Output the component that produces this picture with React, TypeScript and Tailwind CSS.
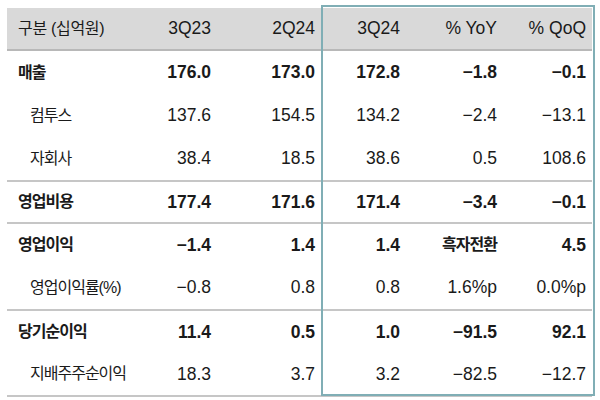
const rows = [
  { group: 1, h: "h-[43px]", label: "매출", bold: true, indent: false, v: ["176.0", "173.0", "172.8", "−1.8", "−0.1"] },
  { group: 1, h: "h-[43px]", label: "컴투스", bold: false, indent: true, v: ["137.6", "154.5", "134.2", "−2.4", "−13.1"] },
  { group: 1, h: "h-[43px]", label: "자회사", bold: false, indent: true, v: ["38.4", "18.5", "38.6", "0.5", "108.6"] },
  { group: 2, h: "h-[40px]", label: "영업비용", bold: true, indent: false, v: ["177.4", "171.6", "171.4", "−3.4", "−0.1"] },
  { group: 3, h: "h-[42px]", label: "영업이익", bold: true, indent: false, v: ["−1.4", "1.4", "1.4", "흑자전환", "4.5"] },
  { group: 3, h: "h-[43px]", label: "영업이익률(%)", bold: false, indent: true, v: ["−0.8", "0.8", "0.8", "1.6%p", "0.0%p"] },
  { group: 4, h: "h-[42px]", label: "당기순이익", bold: true, indent: false, v: ["11.4", "0.5", "1.0", "−91.5", "92.1"] },
  { group: 4, h: "h-[42px]", label: "지배주주순이익", bold: false, indent: true, v: ["18.3", "3.7", "3.2", "−82.5", "−12.7"] },
];

const cols = "grid grid-cols-[123px_91px_104px_85px_97px_85px]";
const num = "font-['Liberation_Sans','Noto_Sans_CJK_KR',sans-serif] text-[17.5px]";
const kor = "font-['Liberation_Sans','Noto_Sans_CJK_KR',sans-serif] text-[16px] tracking-[-1px]";

function Cell({ text, last }: { text: string; last?: boolean }) {
  const isKor = /[가-힣]/.test(text);
  return (
    <div className={`flex items-center justify-end ${last ? "pr-[6px]" : "pr-[10px]"} ${isKor ? kor : num}`}>
      {text}
    </div>
  );
}

export default function App() {
  const groups = [1, 2, 3, 4];
  return (
    <div className="relative w-[600px] h-[400px] bg-white text-[#1a1a1a] overflow-hidden">
      <div className="ml-[7px] mt-[8px] w-[585px]">
        <div className={`${cols} h-[43px] bg-[#d9d9d9] border-b-2 border-[#b8b8b8]`}>
          <div className="flex items-center pl-[11px] font-['Liberation_Sans','Noto_Sans_CJK_KR',sans-serif] text-[16px] tracking-[-0.3px]">
            구분 (십억원)
          </div>
          <Cell text="3Q23" />
          <Cell text="2Q24" />
          <Cell text="3Q24" />
          <Cell text="% YoY" />
          <Cell text="% QoQ" last />
        </div>
        {groups.map((g) => (
          <div key={g} className="border-b-2 border-[#c6c6c6]">
            {rows
              .filter((r) => r.group === g)
              .map((r) => (
                <div key={r.label} className={`${cols} ${r.h} ${r.bold ? "font-bold" : "font-normal"}`}>
                  <div className={`flex items-center ${r.indent ? "pl-[23px]" : "pl-[11px]"} ${kor}`}>{r.label}</div>
                  {r.v.map((t, i) => (
                    <Cell key={i} text={t} last={i === 4} />
                  ))}
                </div>
              ))}
          </div>
        ))}
      </div>
      <div className="absolute left-[321px] top-[5px] w-[274px] h-[391px] border-2 border-[#80aeb5] pointer-events-none" />
    </div>
  );
}
